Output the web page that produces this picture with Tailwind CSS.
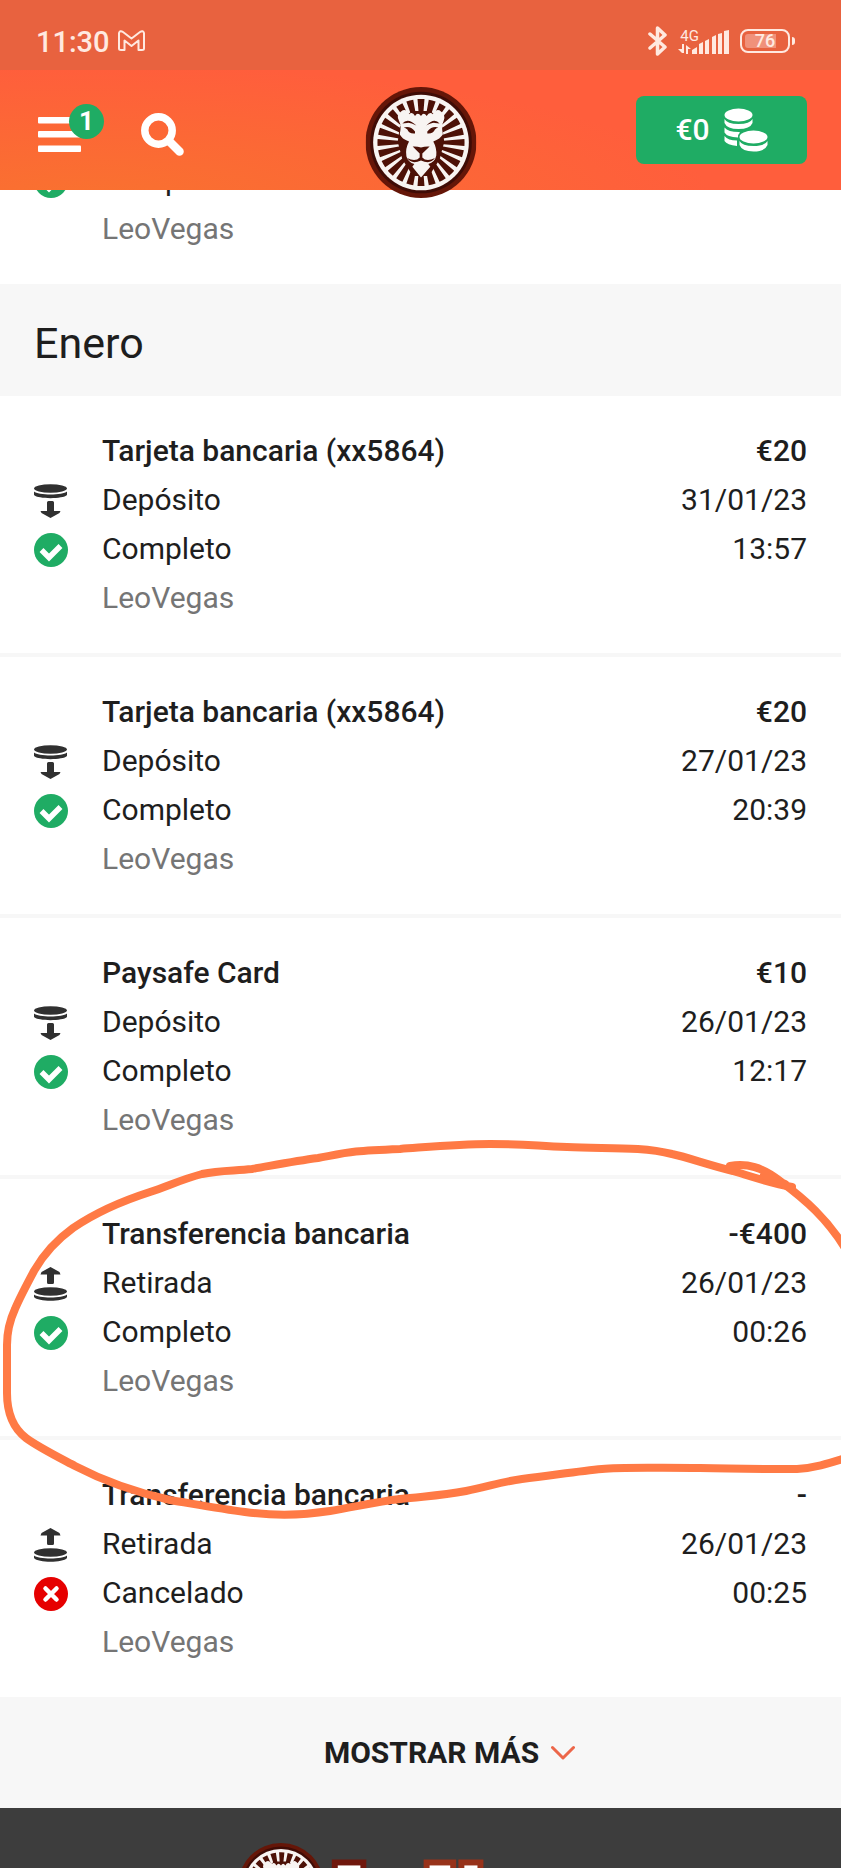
<!DOCTYPE html>
<html lang="es">
<head>
    <meta charset="UTF-8">
    <meta name="viewport" content="width=device-width, initial-scale=1.0">
    <script src="https://cdn.jsdelivr.net/npm/@tailwindcss/browser@4"></script>
    <title>LeoVegas</title>
</head>
<body class="flex min-h-screen flex-col bg-white font-['Roboto',sans-serif] text-[30px] leading-[49px] text-[#1e1e1e]">
    <!-- icons -->
    <svg class="hidden">
        <symbol id="deposit" viewBox="0 0 34 34">
            <ellipse cx="16.500" cy="4.500" rx="16.500" ry="4.200" fill="#303030"/>
            <path d="M0 7.500C4 11.500 29 11.500 33 7.500V11C29 15.200 4 15.200 0 11Z" fill="#303030"/>
            <path d="M13 18.500Q13 17 14.500 17H18.500Q20 17 20 18.500V27H26.500L25.500 29L16.500 34L7.500 29L6.500 27H13Z" fill="#303030"/>
        </symbol>
        <symbol id="withdraw" viewBox="0 0 34 34">
            <ellipse cx="16.500" cy="24.500" rx="16.500" ry="4.200" fill="#303030"/>
            <path d="M0 27.500C4 31.500 29 31.500 33 27.500V30C29 35 4 35 0 30Z" fill="#303030"/>
            <path d="M13 15.500Q13 17 14.500 17H18.500Q20 17 20 15.500V7.500H26.500L25.500 5L16.500 0L7.500 5L6.500 7.500H13Z" fill="#303030"/>
        </symbol>
        <symbol id="done" viewBox="0 0 34 34">
            <circle cx="17" cy="17" r="17" fill="#1fac64"/>
            <path d="M7.500 17L15 24.500L26.500 13" fill="none" stroke="#fff" stroke-width="5.500"/>
        </symbol>
        <symbol id="cancelled" viewBox="0 0 34 34">
            <circle cx="17" cy="17" r="17" fill="#e60000"/>
            <path d="M11.500 11.500L22.500 22.500M22.500 11.500L11.500 22.500" stroke="#fff" stroke-width="4.500" stroke-linecap="round"/>
        </symbol>
        <symbol id="lion" viewBox="75 50 334 334">
            <circle cx="242" cy="217" r="167" fill="#651608"/>
            <circle cx="242" cy="217" r="153" fill="#3f0c06"/>
            <circle cx="242" cy="217" r="144" fill="#f8f4f2"/>
            <circle cx="242" cy="217" r="95" fill="none" stroke="#4d1107" stroke-width="72" pathLength="48" stroke-dasharray="1.250 0.750" stroke-dashoffset="0.625"/>
            <path d="M200 135L215 122H270L285 135L306 170L312 215L298 268L266 318H218L186 268L172 215L178 170Z" fill="#4d1107"/>
            <path d="M206 132Q196 112 182 124Q166 136 176 152Q184 168 178 192Q184 206 206 214Q194 236 198 258Q203 276 222 282L216 290L242 322L270 290L264 282Q284 276 288 256Q290 234 279 214Q300 206 308 192Q302 168 310 152Q318 134 302 124Q290 112 278 132Q268 122 259 137Q250 124 242 137Q232 124 224 137Q216 122 206 132Z" fill="#f8f4f2"/>
            <path d="M186 160Q202 140 228 166Q210 156 200 158Q192 158 186 160ZM298 160Q282 140 258 166Q276 156 284 158Q292 158 298 160Z" fill="#4d1107"/>
            <path d="M190 172Q210 166 224 184V190Q206 192 201 178Q196 174 190 172ZM294 172Q276 166 261 184V190Q278 192 284 178Q288 174 294 172Z" fill="#4d1107"/>
            <path d="M217 229Q230 228 242 232Q254 228 268 229L246 250V262Q258 276 284 264Q270 284 242 271Q214 284 200 264Q226 276 238 262V250Z" fill="#4d1107"/>
        </symbol>
    </svg>

    <header class="sticky top-0 z-20 text-white">
        <!-- phone status bar -->
        <div class="flex h-[70px] items-center justify-between bg-[#e8623f] pr-[46px] pl-9 text-[#ffe9e0]">
            <div class="flex items-center gap-2 pt-[14px]">
                <span class="text-[29px] leading-8 font-medium">11:30</span>
                <svg class="mb-1 h-[21px] w-[27px]" viewBox="0 0 27 21" fill="none" stroke="currentColor" stroke-width="2" stroke-linejoin="round"><path d="M1 3Q2 0 5 2L13.500 8.500L22 2Q25 0 26 3V18.500Q26 20 24 20H20.500V10.500L13.500 16L6.500 10.500V20H3Q1 20 1 18.500Z"/></svg>
            </div>
            <div class="flex items-center pt-[11px]">
                <svg class="mr-[10px] h-[30px] w-5" viewBox="0 0 20 30" fill="none" stroke="currentColor" stroke-width="3.500" stroke-linejoin="round" stroke-linecap="round"><path d="M2 8L17 21L9.500 28V2L17 9L2 22"/></svg>
                <div class="mr-[10px] flex h-[26px] items-end">
                    <div class="-mr-[7px] flex flex-col">
                        <span class="pl-[2px] text-[15px] leading-[15px]">4G</span>
                        <svg class="h-[10px] w-[14px]" viewBox="0 0 14 10" fill="currentColor"><path d="M4 0H6V9H4L0 5H4ZM8 10V1L13 5H10V10Z"/></svg>
                    </div>
                    <svg class="h-6 w-[38px]" viewBox="0 0 38 24" fill="currentColor"><path d="M0 20L5 17V24H0ZM7 14L11 12V24H7ZM13 11L17 9V24H13ZM20 7L24 5V24H20ZM26 4L30 3V24H26ZM32 1L37 0V24H32Z"/></svg>
                </div>
                <div class="flex h-6 w-[50px] items-center justify-center rounded-lg border-2 border-[#ffe9e0] bg-linear-to-r from-[#f0917a] from-75% to-transparent to-75% bg-clip-content p-[3px]">
                    <span class="text-[18px] leading-4 font-medium">76</span>
                </div>
                <span class="ml-[2px] h-2 w-[3px] rounded-r bg-[#ffe9e0]"></span>
            </div>
        </div>

        <nav class="relative flex h-[120px] items-center justify-between bg-[#ff5e3c] bg-[radial-gradient(ellipse_75%_115%_at_10%_110%,#f9722f,#ff5e3c)] pr-[34px] pl-[38px] leading-8">
            <div class="flex items-center gap-[60px] pt-2">
                <button class="relative" aria-label="Menú">
                    <svg class="h-[35px] w-[43px]" viewBox="0 0 43 35" fill="#fff"><rect width="43" height="6.500" rx="1"/><rect y="14" width="43" height="6.500" rx="1"/><rect y="28.500" width="43" height="6.500" rx="1"/></svg>
                    <span class="absolute -top-[13px] -right-[23px] flex size-[35px] items-center justify-center rounded-full bg-[#1fac64] text-[26px] font-bold">1</span>
                </button>
                <button aria-label="Buscar">
                    <svg class="size-[43px]" viewBox="0 0 43 43" fill="none" stroke="#fff"><circle cx="17.500" cy="17.500" r="13.700" stroke-width="7.500"/><path d="M28 28L38.500 38.500" stroke-width="8.500" stroke-linecap="round"/></svg>
                </button>
            </div>
            <a href="#" class="absolute top-[17px] left-1/2 -translate-x-1/2" aria-label="LeoVegas"><svg class="size-[111px]"><use href="#lion"/></svg></a>
            <button class="flex h-[68px] w-[171px] items-center justify-center gap-[14px] rounded-lg bg-[#1fac64] font-medium">
                €0
                <svg class="size-11" viewBox="0 0 44 44" fill="#fff">
                    <ellipse cx="14.500" cy="7" rx="14" ry="6.500"/>
                    <path d="M.5 11Q3 16 14.500 16T28.500 11V15Q26 21 14.500 21T.5 15ZM.5 19.500Q4 24 15 24L16 24.500Q14 26 14 29.500Q3 29 .5 24.500ZM.5 28Q4 32.500 13 32.500V38Q3 37 .5 33Z"/>
                    <ellipse cx="29.500" cy="29" rx="14" ry="6.500"/>
                    <path d="M15.500 33Q18 38 29.500 38T43.500 33V37Q41 43.500 29.500 43.500T15.500 37Z"/>
                </svg>
            </button>
        </nav>
    </header>

    <main>
        <!-- last movement of the month above, scrolled under the header -->
        <article class="-mt-[163px] flex gap-[34px] px-[34px] pt-[30px] pb-[31px]">
            <div class="w-[34px] pt-[49px]">
                <div class="flex h-[49px] items-center pt-[2px]"><svg class="size-[34px]"><use href="#deposit"/></svg></div>
                <div class="flex h-[49px] items-center pt-[2px]"><svg class="size-[34px]"><use href="#done"/></svg></div>
            </div>
            <div class="flex-1 pt-[49px]">
                <p>Depósito</p>
                <p>Completo</p>
                <p class="text-[#757575]">LeoVegas</p>
            </div>
        </article>

        <h2 class="bg-[#f7f7f7] px-[34px] pt-[35px] pb-7 text-[43px]">Enero</h2>

        <article class="flex gap-[34px] px-[34px] pt-[30px] pb-[31px]">
            <div class="w-[34px] pt-[49px]">
                <div class="flex h-[49px] items-center pt-[2px]"><svg class="size-[34px]"><use href="#deposit"/></svg></div>
                <div class="flex h-[49px] items-center pt-[2px]"><svg class="size-[34px]"><use href="#done"/></svg></div>
            </div>
            <div class="flex-1">
                <h3 class="font-medium">Tarjeta bancaria (xx5864)</h3>
                <p>Depósito</p>
                <p>Completo</p>
                <p class="text-[#757575]">LeoVegas</p>
            </div>
            <div class="text-right">
                <p class="font-medium">€20</p>
                <p>31/01/23</p>
                <p>13:57</p>
            </div>
        </article>

        <article class="flex gap-[34px] border-t-4 border-[#f7f7f7] px-[34px] pt-[30px] pb-[31px]">
            <div class="w-[34px] pt-[49px]">
                <div class="flex h-[49px] items-center pt-[2px]"><svg class="size-[34px]"><use href="#deposit"/></svg></div>
                <div class="flex h-[49px] items-center pt-[2px]"><svg class="size-[34px]"><use href="#done"/></svg></div>
            </div>
            <div class="flex-1">
                <h3 class="font-medium">Tarjeta bancaria (xx5864)</h3>
                <p>Depósito</p>
                <p>Completo</p>
                <p class="text-[#757575]">LeoVegas</p>
            </div>
            <div class="text-right">
                <p class="font-medium">€20</p>
                <p>27/01/23</p>
                <p>20:39</p>
            </div>
        </article>

        <article class="flex gap-[34px] border-t-4 border-[#f7f7f7] px-[34px] pt-[30px] pb-[31px]">
            <div class="w-[34px] pt-[49px]">
                <div class="flex h-[49px] items-center pt-[2px]"><svg class="size-[34px]"><use href="#deposit"/></svg></div>
                <div class="flex h-[49px] items-center pt-[2px]"><svg class="size-[34px]"><use href="#done"/></svg></div>
            </div>
            <div class="flex-1">
                <h3 class="font-medium">Paysafe Card</h3>
                <p>Depósito</p>
                <p>Completo</p>
                <p class="text-[#757575]">LeoVegas</p>
            </div>
            <div class="text-right">
                <p class="font-medium">€10</p>
                <p>26/01/23</p>
                <p>12:17</p>
            </div>
        </article>

        <article class="relative flex gap-[34px] border-t-4 border-[#f7f7f7] px-[34px] pt-[30px] pb-[31px]">
            <div class="w-[34px] pt-[49px]">
                <div class="flex h-[49px] items-center pt-[2px]"><svg class="size-[34px]"><use href="#withdraw"/></svg></div>
                <div class="flex h-[49px] items-center pt-[2px]"><svg class="size-[34px]"><use href="#done"/></svg></div>
            </div>
            <div class="flex-1">
                <h3 class="font-medium">Transferencia bancaria</h3>
                <p>Retirada</p>
                <p>Completo</p>
                <p class="text-[#757575]">LeoVegas</p>
            </div>
            <div class="text-right">
                <p class="font-medium">-€400</p>
                <p>26/01/23</p>
                <p>00:26</p>
            </div>
            <!-- hand-drawn loop round this movement -->
            <svg class="pointer-events-none absolute -top-10 left-0 z-10 h-[400px] w-full" viewBox="0 1139 841 400" preserveAspectRatio="none" fill="none" stroke="#ff7a45" stroke-width="8" stroke-linecap="round" stroke-linejoin="round">
                <path d="M792 1187C770 1183 753 1177 733 1171C705 1164 690 1158 672 1154C640 1146 605 1149 567 1147C535 1146 530 1144 490 1144C460 1144 440 1146 400 1149C350 1151 350 1152 318 1158C295 1161 275 1165 252 1169C235 1171 220 1170 202 1174C183 1179 168 1186 150 1192C122 1201 95 1213 73 1228C55 1241 42 1257 34 1271C27 1284 20 1297 15 1309C9 1322 7 1333 7 1345V1393C7 1412 13 1428 26 1438C38 1447 60 1458 75 1466C98 1478 130 1491 170 1500C200 1505 222 1509 245 1512C275 1516 305 1515 330 1511C355 1507 375 1502 400 1499C425 1496 440 1496 466 1491C490 1486 505 1481 522 1479C555 1475 580 1471 602 1469C620 1467 650 1468 700 1468C735 1469 770 1469 797 1469C815 1468 830 1463 846 1458"/>
                <path d="M730 1166C747 1163 762 1167 780 1181C806 1200 827 1219 845 1248M764 1175L785 1184"/>
            </svg>
        </article>

        <article class="flex gap-[34px] border-t-4 border-[#f7f7f7] px-[34px] pt-[30px] pb-[31px]">
            <div class="w-[34px] pt-[49px]">
                <div class="flex h-[49px] items-center pt-[2px]"><svg class="size-[34px]"><use href="#withdraw"/></svg></div>
                <div class="flex h-[49px] items-center pt-[2px]"><svg class="size-[34px]"><use href="#cancelled"/></svg></div>
            </div>
            <div class="flex-1">
                <h3 class="font-medium">Transferencia bancaria</h3>
                <p>Retirada</p>
                <p>Cancelado</p>
                <p class="text-[#757575]">LeoVegas</p>
            </div>
            <div class="text-right">
                <p class="font-medium">-</p>
                <p>26/01/23</p>
                <p>00:25</p>
            </div>
        </article>

        <button class="flex h-[111px] w-full items-center justify-center gap-3 bg-[#f7f7f7] pl-[58px] font-bold">
            MOSTRAR MÁS
            <svg class="h-4 w-6" viewBox="0 0 24 16" fill="none" stroke="#ec6649" stroke-width="3" stroke-linecap="round" stroke-linejoin="round"><path d="M1.500 2.500L12 13L22.500 2.500"/></svg>
        </button>
    </main>

    <footer class="flex h-[60px] grow justify-center overflow-hidden bg-[#3d3d3d] pt-[35px]">
        <svg class="h-[86px] w-[366px] shrink-0" viewBox="0 0 366 86">
            <use href="#lion" width="86" height="86"/>
            <g font-family="DejaVu Serif" font-weight="bold" font-size="60" fill="#fff" stroke-width="12" paint-order="stroke">
                <text x="97" y="66" stroke="#6f170c">L<tspan font-size="36">eo</tspan></text>
                <text x="192" y="66" stroke="#97321a">V<tspan font-size="36">egas</tspan></text>
            </g>
        </svg>
    </footer>
</body>
</html>
